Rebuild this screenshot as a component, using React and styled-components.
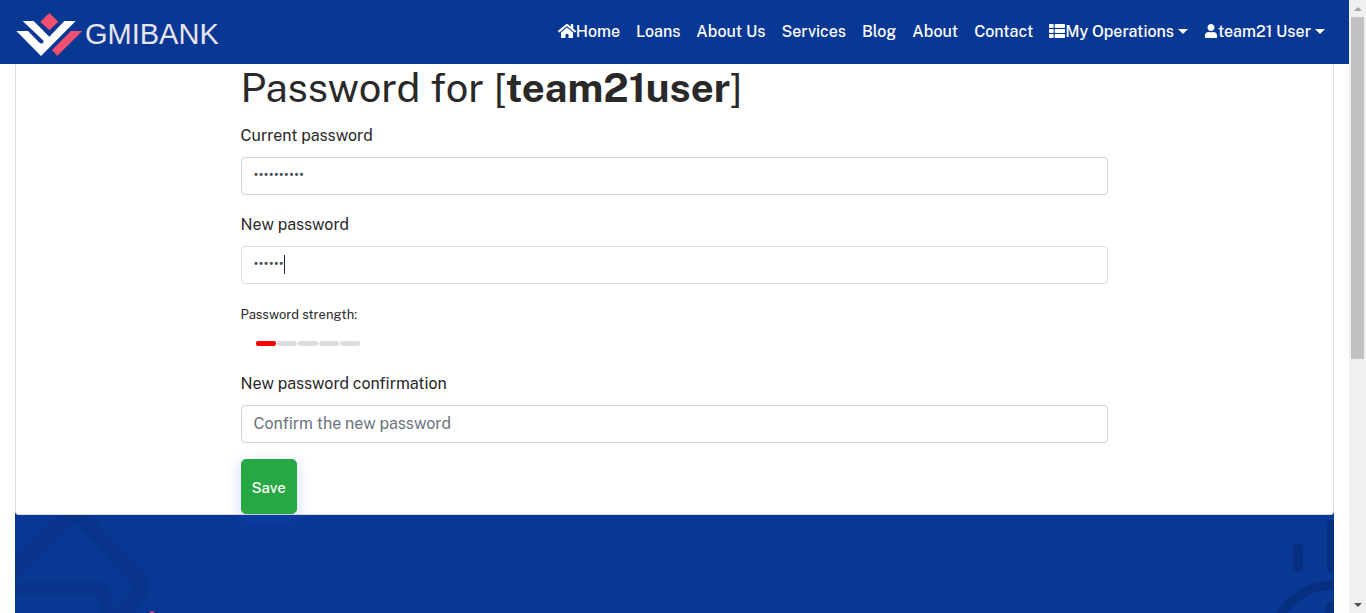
import React from "react";
import styled, { createGlobalStyle } from "styled-components";
import { FaHome, FaThList, FaUser } from "react-icons/fa";

const GlobalStyle = createGlobalStyle`
  *, *::before, *::after { box-sizing: border-box; }
  body {
    margin: 0;
    background: #fff;
    color: #292929;
    font-family: "Public Sans", Inter, "Liberation Sans", sans-serif;
    font-size: 16px;
    line-height: 27px;
  }
`;

const Shell = styled.div`
  display: flex;
  height: 100vh;
  overflow: hidden;
`;

const Page = styled.div`
  flex: 1;
  min-width: 0;
  display: flex;
  flex-direction: column;
`;

const Navbar = styled.header`
  display: flex;
  align-items: center;
  justify-content: space-between;
  flex-shrink: 0;
  height: 64px;
  padding: 0 24px 2px 16px;
  background: #093794;
`;

const Brand = styled.a`
  display: flex;
  align-items: center;
  gap: 2px;
  padding-top: 6px;
  color: #e8e4ee;
  font-family: "Liberation Sans", Arial, sans-serif;
  font-size: 29px;
  text-decoration: none;
`;

const NavLinks = styled.nav`
  display: flex;
  align-items: center;
  gap: 16px;
`;

const NavLink = styled.a`
  display: flex;
  align-items: center;
  color: #fff;
  font-size: 16px;
  font-weight: 500;
  text-decoration: none;
  white-space: nowrap;
`;

const Caret = styled.span`
  margin-left: 4px;
  border-top: 5px solid #fff;
  border-left: 5px solid transparent;
  border-right: 5px solid transparent;
`;

const Content = styled.main`
  flex: 1;
  display: flex;
  flex-direction: column;
  margin: 0 15px;
  background: #093794;
`;

const Card = styled.section`
  background: #fff;
  border: 1px solid #dfdfdf;
  border-top: 0;
  border-radius: 0 0 4px 4px;
`;

const Form = styled.form`
  width: calc((100% + 30px) * 2 / 3 - 30px);
  margin: 0 auto;
`;

const Title = styled.h1`
  margin: 0 0 10px;
  font-size: 40px;
  font-weight: 400;
  line-height: 48px;
  white-space: nowrap;
`;

const Field = styled.div`
  margin-bottom: 16px;
`;

const Label = styled.label`
  display: block;
  margin-bottom: 8px;
`;

const InputWrap = styled.div`
  position: relative;
`;

const Input = styled.input`
  display: block;
  width: 100%;
  height: 38px;
  padding: 5px 12px 7px;
  border: 1px solid ${(p) => (p.$active ? "#dcdcdc" : "#ced4da")};
  border-radius: 4px;
  outline: 0;
  background: #fff;
  color: #495057;
  font-family: inherit;
  font-size: 16px;
  &::placeholder { color: #6c757d; }
  &[value]:not([value=""]) {
    font-family: Roboto, sans-serif;
    font-size: 15px;
  }
`;

const TextCursor = styled.span`
  position: absolute;
  top: 9px;
  left: 43px;
  width: 1px;
  height: 19px;
  background: #212529;
`;

const Strength = styled.div`
  margin-bottom: 16px;
  font-size: 13px;
  line-height: 29px;
`;

const Bars = styled.div`
  display: flex;
  gap: 1px;
  height: 25px;
  padding: 12px 0 0 15px;
`;

const Bar = styled.span`
  width: 20px;
  height: 5px;
  border-radius: 2px;
  background: ${(p) => (p.$on ? "#f00" : "#ddd")};
`;

const SaveButton = styled.button`
  position: relative;
  display: block;
  height: 55px;
  padding: 2px 10px 0;
  border: 1px solid #28a745;
  border-radius: 5px;
  background: #28a745;
  box-shadow: 0 5px 15px rgba(44, 101, 248, 0.25);
  color: #fff;
  font-family: inherit;
  font-size: 15px;
  font-weight: 500;
`;

const Footer = styled.footer`
  flex: 1;
  display: flex;
  justify-content: space-between;
  min-height: 98px;
`;

const Scrollbar = styled.div`
  display: flex;
  flex-direction: column;
  align-items: center;
  justify-content: space-between;
  width: 17px;
  padding: 7px 0 6px;
  background: #f0f0f0;
`;

const Arrow = styled.span`
  border-left: 4px solid transparent;
  border-right: 4px solid transparent;
  ${(p) => (p.$down ? "border-top: 4px solid #505050;" : "border-bottom: 4px solid #a3a3a3;")}
`;

const Track = styled.div`
  flex: 1;
  width: 13px;
  margin: 6px 0;
`;

const Thumb = styled.div`
  height: 59%;
  background: #c1c1c1;
`;

const LogoMark = () => (
  <svg width="67" height="44" viewBox="48 36 201 132" aria-hidden="true">
    <path fill="#f0506e" d="M148 39L175 65L148 91L121 65Z" />
    <path
      fill="#fff"
      d="M68 63H101L148 110L193 63H227L123 168L49 93H84L117 127Q123 133 129 129Q133 125 129 121Z"
    />
    <path fill="#f0506e" d="M213 93H247L172 167L156 150Z" />
  </svg>
);

const LINKS = [
  { text: "Home", Icon: FaHome, iconSize: 18 },
  { text: "Loans" },
  { text: "About Us" },
  { text: "Services" },
  { text: "Blog" },
  { text: "About" },
  { text: "Contact" },
  { text: "My Operations", Icon: FaThList, iconSize: 16, menu: true },
  { text: "team21 User", Icon: FaUser, iconSize: 14, menu: true },
];

export default function App() {
  return (
    <>
      <GlobalStyle />
      <Shell>
        <Page>
          <Navbar>
            <Brand href="#">
              <LogoMark />
              GMIBANK
            </Brand>
            <NavLinks>
              {LINKS.map(({ text, Icon, iconSize, menu }) => (
                <NavLink href="#" key={text}>
                  {Icon && <Icon size={iconSize} />}
                  {text}
                  {menu && <Caret />}
                </NavLink>
              ))}
            </NavLinks>
          </Navbar>
          <Content>
            <Card>
              <Form onSubmit={(e) => e.preventDefault()}>
                <Title>
                  Password for [<strong>team21user</strong>]
                </Title>
                <Field>
                  <Label htmlFor="current">Current password</Label>
                  <Input id="current" type="password" value="abcdefghij" readOnly />
                </Field>
                <Field>
                  <Label htmlFor="new">New password</Label>
                  <InputWrap>
                    <Input id="new" type="password" value="abcdef" readOnly $active />
                    <TextCursor />
                  </InputWrap>
                </Field>
                <Strength>
                  Password strength:
                  <Bars>
                    {[1, 2, 3, 4, 5].map((n) => (
                      <Bar key={n} $on={n === 1} />
                    ))}
                  </Bars>
                </Strength>
                <Field>
                  <Label htmlFor="confirm">New password confirmation</Label>
                  <Input id="confirm" type="password" placeholder="Confirm the new password" />
                </Field>
                <SaveButton type="submit">Save</SaveButton>
              </Form>
            </Card>
            <Footer>
              <svg width="150" height="98" viewBox="0 0 150 98" fill="none" aria-hidden="true">
                <path d="M-4 58L59 -4L122 61Q130 71 122 81L103 102" stroke="#08358b" strokeWidth="16" />
                <path d="M-2 73H80Q91 73 91 86V102" stroke="#08358b" strokeWidth="13" />
                <path d="M134 98L137 96L140 98Z" fill="#f0506e" />
              </svg>
              <svg width="60" height="98" viewBox="0 0 60 98" fill="none" aria-hidden="true">
                <rect x="19" y="28" width="10" height="29" rx="5" fill="#062f80" />
                <rect x="53" y="5" width="10" height="52" rx="4" fill="#062f80" />
                <rect x="52" y="87" width="12" height="30" rx="5" fill="#062f80" />
                <circle cx="60" cy="133" r="63" stroke="#062f80" strokeWidth="9" />
              </svg>
            </Footer>
          </Content>
        </Page>
        <Scrollbar aria-hidden="true">
          <Arrow />
          <Track>
            <Thumb />
          </Track>
          <Arrow $down />
        </Scrollbar>
      </Shell>
    </>
  );
}
